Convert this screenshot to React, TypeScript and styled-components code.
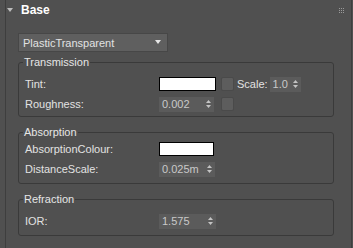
import React from "react";
import styled, { createGlobalStyle } from "styled-components";

const GlobalStyle = createGlobalStyle`
  html, body { margin: 0; padding: 0; background: #505050; }
  body { font-family: "Liberation Sans", Arial, sans-serif; font-size: 11px; color: #dcdcdc; }
  * { box-sizing: border-box; }
`;

const Page = styled.div`
  width: 353px;
  height: 248px;
  overflow: hidden;
  background: #505050;
`;

const Rollout = styled.div`
  margin-left: 5px;
  width: 347px;
  height: 248px;
  border-left: 1px solid #3e3e3e;
  border-right: 1px solid #3e3e3e;
`;

const Header = styled.div`
  height: 20px;
  display: flex;
  align-items: center;
  padding-left: 1px;
`;

const Title = styled.span`
  margin-left: 8px;
  font-size: 12px;
  font-weight: bold;
  color: #ffffff;
`;

const Grip = styled.svg`
  margin-left: auto;
  margin-right: 7px;
`;

const Body = styled.div`
  padding: 13px 0 0 12px;
`;

const Dropdown = styled.div`
  width: 150px;
  height: 19px;
  background: #5f5f5f;
  border: 1px solid #474747;
  display: flex;
  align-items: center;
  padding: 0 6px 0 4px;
  color: #e2e2e2;
  font-size: 11px;
`;

const DropText = styled.span`
  flex: 1;
`;

const Group = styled.fieldset<{ $top: number; $bottom: number }>`
  width: 316px;
  margin: ${(p) => p.$top}px 0 0 0;
  padding: 0 0 ${(p) => p.$bottom}px 6px;
  border: 1px solid #3a3a3a;
  border-radius: 3px;
  min-width: 0;
`;

const Legend = styled.legend`
  margin-left: -2px;
  padding: 0 1px;
  line-height: 13px;
  font-size: 11px;
  color: #e6e6e6;
`;

const Rows = styled.div<{ $pad: number }>`
  padding-top: ${(p) => p.$pad}px;
  display: flex;
  flex-direction: column;
`;

const Row = styled.div`
  height: 20px;
  display: flex;
  align-items: center;
`;

const Label = styled.span`
  width: 134px;
  color: #e2e2e2;
`;

const Swatch = styled.div<{ $w: number }>`
  width: ${(p) => p.$w}px;
  height: 14px;
  background: #ffffff;
  border: 1px solid #000000;
`;

const Check = styled.div<{ $ml: number }>`
  margin-left: ${(p) => p.$ml}px;
  width: 13px;
  height: 14px;
  background: #5d5d5d;
  border: 1px solid #4a4a4a;
  border-radius: 2px;
`;

const InlineLabel = styled.span`
  margin-left: 3px;
  color: #e2e2e2;
`;

const Spinner = styled.div<{ $w: number; $ml?: number }>`
  width: ${(p) => p.$w}px;
  margin-left: ${(p) => p.$ml ?? 0}px;
  height: 15px;
  background: #5b5b5b;
  display: flex;
  align-items: center;
  padding: 0 3px 0 3px;
  color: #c9c9c9;
`;

const SpinText = styled.span`
  flex: 1;
`;

const Arrows = () => (
  <svg width="5" height="8" viewBox="0 0 5 8">
    <path d="M2.5 0 L5 3 L0 3 Z" fill="#c4c4c4" />
    <path d="M0 5 L5 5 L2.5 8 Z" fill="#c4c4c4" />
  </svg>
);

const Spin = ({ value, w, ml }: { value: string; w: number; ml?: number }) => (
  <Spinner $w={w} $ml={ml}>
    <SpinText>{value}</SpinText>
    <Arrows />
  </Spinner>
);

export default function App() {
  return (
    <Page>
      <GlobalStyle />
      <Rollout>
        <Header>
          <svg width="6" height="5" viewBox="0 0 6 5">
            <path d="M0 0 L6 0 L3 4 Z" fill="#bdbdbd" />
          </svg>
          <Title>Base</Title>
          <Grip width="5" height="5" viewBox="0 0 5 5">
            {[0, 2, 4].map((y) =>
              [0, 2, 4].map((x) => (
                <rect key={`${x}-${y}`} x={x} y={y} width="1" height="1" fill="#9a9a9a" />
              ))
            )}
          </Grip>
        </Header>
        <Body>
          <Dropdown>
            <DropText>PlasticTransparent</DropText>
            <svg width="6" height="5" viewBox="0 0 6 5">
              <path d="M0 0 L6 0 L3 4 Z" fill="#e6e6e6" />
            </svg>
          </Dropdown>

          <Group $top={4} $bottom={2}>
            <Legend>Transmission</Legend>
            <Rows $pad={5}>
              <Row>
                <Label>Tint:</Label>
                <Swatch $w={57} />
                <Check $ml={5} />
                <InlineLabel>Scale:</InlineLabel>
                <Spin value="1.0" w={31} ml={2} />
              </Row>
              <Row>
                <Label>Roughness:</Label>
                <Spin value="0.002" w={55} />
                <Check $ml={7} />
              </Row>
            </Rows>
          </Group>

          <Group $top={9} $bottom={4}>
            <Legend>Absorption</Legend>
            <Rows $pad={0}>
              <Row>
                <Label>AbsorptionColour:</Label>
                <Swatch $w={55} />
              </Row>
              <Row>
                <Label>DistanceScale:</Label>
                <Spin value="0.025m" w={56} />
              </Row>
            </Rows>
          </Group>

          <Group $top={9} $bottom={4}>
            <Legend>Refraction</Legend>
            <Rows $pad={5}>
              <Row>
                <Label>IOR:</Label>
                <Spin value="1.575" w={57} />
              </Row>
            </Rows>
          </Group>
        </Body>
      </Rollout>
    </Page>
  );
}
